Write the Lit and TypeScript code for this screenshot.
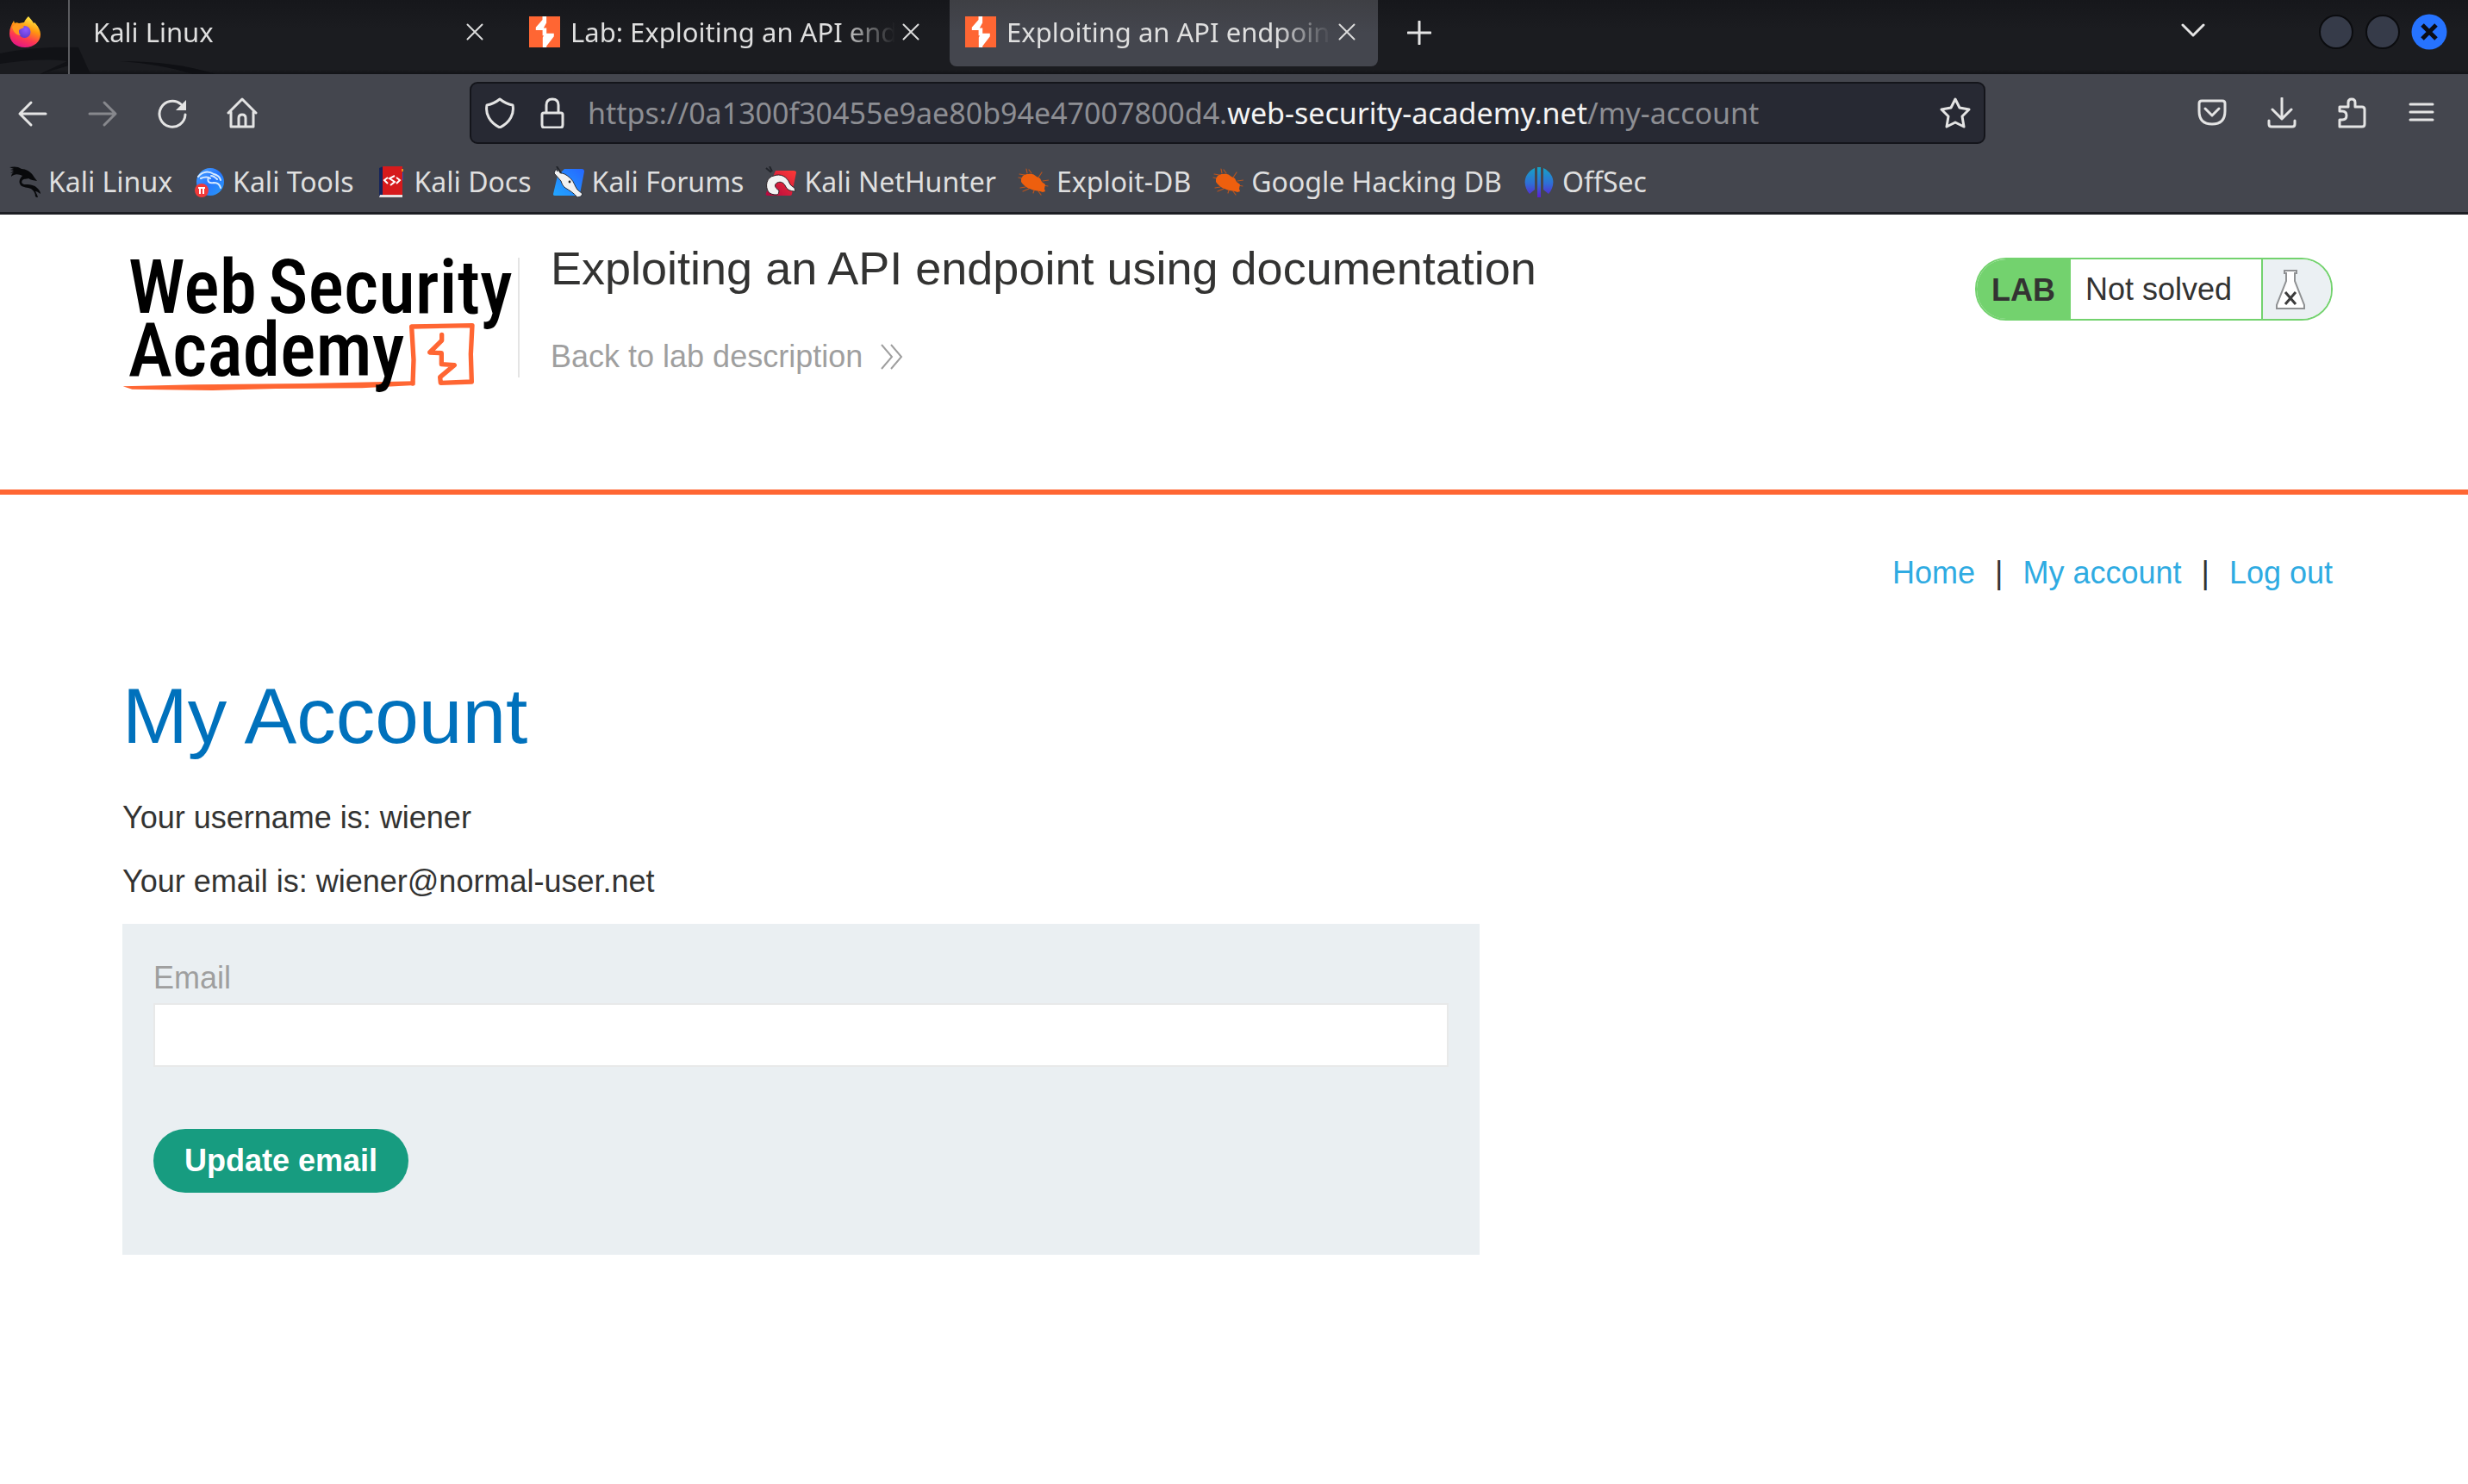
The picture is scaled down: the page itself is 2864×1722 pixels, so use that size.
import { LitElement, html, css, svg, TemplateResult } from "lit";
import { customElement, property } from "lit/decorators.js";

const burpIcon = html`<svg class="fav" viewBox="0 0 36 36" aria-hidden="true">
  <rect width="36" height="36" fill="#ff6633" />
  <path fill="#fff" d="M15.5 0h4.600v7.500L16.800 13.600h3.400v6.200h8.600v3.400L20.200 34.400V36h-4.400V24.600L17 22.200h-1.400V16H7.800v-3.200L15.500 4z" />
</svg>`;

const closeGlyph = html`<svg class="x" viewBox="0 0 20 20" aria-hidden="true">
  <path d="M1.5 1.5l17 17M18.5 1.5l-17 17" fill="none" stroke="#dcdcdc" stroke-width="2" stroke-linecap="round" />
</svg>`;

const bug = html`<svg class="fav" viewBox="0 0 36 36" aria-hidden="true">
  <g stroke="#b8541f" stroke-width="1.2" fill="none" stroke-linecap="round">
    <path d="M8 10L2 9M11 8l-1-5M16 8l-3-4M24 13l4-6M5 14L1 13M29 17l7-1M30 22l5 1M9 24l-6 1M13 26l-7 3M24 29l3 4M19 28l-1 3" />
  </g>
  <path fill="#ee5f0e" d="M4 15c1-4 4-6 8-6 4-1 7 0 10 3l4 2 2 4 4 3-1 5 1 3-3 1-3-1c-4-1-8-1-12-3-4-1-8-5-10-8z" />
</svg>`;

interface Bookmark {
  label: string;
  icon: TemplateResult;
}

const bookmarks: Bookmark[] = [
  {
    label: "Kali Linux",
    icon: html`<svg class="fav" viewBox="0 0 36 36" aria-hidden="true">
      <path fill="#08090b" d="M0 1c5-1 10-1 14 2 5 0 10 3 13 7 1 2 3 4 5 7-4-1-7-1-10-3-2 1-5 0-7 2-2 3 0 5 4 5 6 0 10 1 13 4 2 2 4 4 4 7-3-2-4-3-6-3 1 2 3 5 3 8l-3-2c0-4-2-7-5-9-4-2-9-1-12-4-3-4-1-8 2-11C11 9 6 8 2 12c0-2 1-4 3-5L1 8l4-3-4-1 4-1z" />
    </svg>`,
  },
  {
    label: "Kali Tools",
    icon: html`<svg class="fav" viewBox="0 0 36 36" aria-hidden="true">
      <defs><linearGradient id="kt" x1="0" y1="0" x2="1" y2="1"><stop offset="0" stop-color="#4aa5ff" /><stop offset=".5" stop-color="#2777ff" /><stop offset="1" stop-color="#2a9bf5" /></linearGradient></defs>
      <circle cx="19" cy="18" r="16" fill="url(#kt)" />
      <path d="M5 12c5-6 12-7 18-3 4 1 7 3 8 7M8 14c4-2 9-2 11 0M17 13c-2 5 1 7 6 6 4 0 7 2 8 6M20 11c3 0 5 2 7 4" fill="none" stroke="#d6e9ff" stroke-width="2" stroke-linecap="round" />
      <circle cx="9" cy="28" r="8" fill="#f03a3a" />
      <path d="M5 25h8M7 25v7M11 25v7" stroke="#fff" stroke-width="2" fill="none" />
    </svg>`,
  },
  {
    label: "Kali Docs",
    icon: html`<svg class="fav" viewBox="0 0 36 36" aria-hidden="true">
      <path fill="#15245c" d="M4 2l5-2v33l-5 2z" />
      <path fill="#d61a1c" d="M8 0h23v33H8z" />
      <path fill="#e98b1f" d="M30 3h2v3h-2z" /><path fill="#2d4db5" d="M31 7h1v9h-1z" />
      <path fill="#e6e2e2" d="M5 33h26v3H4z" />
      <path d="M14 13l-4 3 4 4M24 13l4 3-4 4M22 11l-6 3 6 4-5 4" fill="none" stroke="#fff" stroke-width="2" />
    </svg>`,
  },
  {
    label: "Kali Forums",
    icon: html`<svg class="fav" viewBox="0 0 36 36" aria-hidden="true">
      <defs><linearGradient id="kf" x1="1" y1="0" x2="0" y2="1"><stop offset="0" stop-color="#2566ff" /><stop offset="1" stop-color="#22a7ff" /></linearGradient></defs>
      <path fill="url(#kf)" d="M13 3h20c2 0 3 1 3 3l-5 26c0 1-1 2-2 2H2c-2 0-2-1-2-2L5 11z" />
      <path fill="#f1f1f1" stroke="#2b2f38" stroke-width="1" d="M1 8l2-5 2 3 0-5 4 7c4 0 8 3 12 7 3 3 4 8 7 12l6 5-2 3-4 1c-4-5-9-8-14-11-3-2-4-5-5-8z" />
      <circle cx="19" cy="18" r="1.4" fill="#222" />
      <path d="M4 0l5 8" stroke="#22252b" stroke-width="2" />
    </svg>`,
  },
  {
    label: "Kali NetHunter",
    icon: html`<svg class="fav" viewBox="0 0 36 36" aria-hidden="true">
      <defs><linearGradient id="kn" x1="1" y1="0" x2="0" y2="1"><stop offset="0" stop-color="#ff3a36" /><stop offset="1" stop-color="#b3063f" /></linearGradient></defs>
      <path fill="url(#kn)" d="M12 5h21c2 0 3 1 3 2l-5 25c0 1-1 2-2 2H3c-2 0-3-1-2-3z" />
      <path fill="#f3f3f3" stroke="#2b2226" stroke-width="1" d="M4 30C-1 23 2 12 10 11c8-3 15 1 18 8 1 3 3 4 6 6l1 4c-4 0-9-1-11-5-2-5-6-7-10-5-4 2-3 6 2 9 0 3-1 5-3 5-4 0-7-1-9-3z" />
      <path d="M1 2l6 5M5 0l3 6" stroke="#22252b" stroke-width="2" />
    </svg>`,
  },
  { label: "Exploit-DB", icon: bug },
  { label: "Google Hacking DB", icon: bug },
  {
    label: "OffSec",
    icon: html`<svg class="fav" viewBox="0 0 36 36" aria-hidden="true">
      <defs><linearGradient id="os" gradientUnits="userSpaceOnUse" x1="0" y1="0" x2="0" y2="36"><stop offset="0" stop-color="#14a6c4" /><stop offset=".55" stop-color="#2f6fd6" /><stop offset="1" stop-color="#5b1fd0" /></linearGradient></defs>
      <path fill="url(#os)" d="M13 2v25l-6 5C-1 23-1 9 13 2z" />
      <path fill="url(#os)" d="M23 2v25l6 5c8-9 8-23-6-30z" />
      <path fill="url(#os)" d="M16 1h4v35h-4z" />
    </svg>`,
  },
];

const line = (d: string, w = 3) =>
  svg`<path d=${d} fill="none" stroke="#e4e4e4" stroke-width=${w} stroke-linecap="round" stroke-linejoin="round" />`;

@customElement("browser-tab")
export class BrowserTab extends LitElement {
  @property() label = "";
  @property({ type: Boolean }) icon = false;
  @property({ type: Boolean, reflect: true }) active = false;

  static styles = css`
    :host {
      box-sizing: border-box;
      display: flex;
      align-items: center;
      width: 497px;
      height: 77px;
      padding: 0 26px 3px 18px;
      border-radius: 0 0 8px 8px;
    }
    :host([active]) {
      background: linear-gradient(#3e3f44, #44464e 50%);
    }
    .fav {
      width: 36px;
      height: 36px;
      margin-right: 12px;
      flex: none;
    }
    .title {
      flex: 1;
      overflow: hidden;
      white-space: nowrap;
      margin-right: 8px;
      mask-image: linear-gradient(to right, #000 calc(100% - 64px), transparent);
    }
    .close {
      flex: none;
      display: flex;
      padding: 0;
      border: 0;
      background: none;
    }
    .x {
      width: 20px;
      height: 20px;
    }
  `;

  render() {
    return html`${this.icon ? burpIcon : ""}<span class="title">${this.label}</span
      ><button class="close" aria-label="Close tab">${closeGlyph}</button>`;
  }
}

@customElement("app-root")
export class AppRoot extends LitElement {
  static styles = css`
    :host {
      display: block;
      min-height: 100vh;
      background: #fff;
      color: #333332;
      font-family: "Liberation Sans", Arial, sans-serif;
      font-size: 36px;
      line-height: 42px;
    }
    * {
      box-sizing: border-box;
    }
    button {
      padding: 0;
      border: 0;
      background: none;
      font: inherit;
      color: inherit;
    }
    a {
      color: inherit;
      text-decoration: none;
    }
    svg {
      display: block;
      flex: none;
    }
    h1,
    h2,
    p {
      margin: 0;
      font-weight: 400;
    }

    .chrome {
      font-family: "Noto Sans", sans-serif;
      font-size: 32px;
      color: #dfdfdf;
      background: #44464e;
      border-bottom: 3px solid #1d1f24;
    }
    .tabs {
      position: relative;
      display: flex;
      align-items: flex-start;
      height: 86px;
      background: linear-gradient(#16171b, #1b1c20 40%, #1b1c20 94%, #121317);
    }
    .wallpaper {
      position: absolute;
      left: 0;
      top: 0;
      width: 260px;
      height: 86px;
    }
    .tabs > :not(.wallpaper) {
      position: relative;
    }
    .pinned {
      width: 81px;
      height: 86px;
      padding: 19px 0 0 11px;
      border-right: 2px solid #5b5c60;
      margin-right: 9px;
    }
    .tablist {
      display: flex;
      gap: 9px;
      font-size: 31px;
    }
    .newtab {
      margin: 24px 0 0 34px;
    }
    .alltabs {
      margin: 27px 131px 0 auto;
    }
    .window {
      display: flex;
      gap: 12px;
      padding: 16px 24px 0 0;
    }

    .toolbar {
      display: flex;
      align-items: center;
      padding: 9px 36px 0 20px;
    }
    .history {
      display: flex;
      gap: 45px;
      width: 525px;
    }
    .urlbar {
      flex: 1;
      display: flex;
      align-items: center;
      height: 72px;
      padding: 0 15px;
      border: 2px solid #14151b;
      border-radius: 9px;
      background: #272933;
    }
    .urlbar .lock {
      margin: 0 27px 0 29px;
    }
    .url {
      flex: 1;
      font-size: 34px;
      white-space: nowrap;
      color: #8d8e93;
    }
    .url b {
      font-weight: 400;
      color: #f4f4f4;
    }
    .actions {
      display: flex;
      gap: 45px;
      margin-left: 245px;
    }
    .bookmarks {
      display: flex;
      gap: 25px;
      padding: 24px 10px 15px 11px;
      line-height: 40px;
    }
    .bookmark {
      display: flex;
      align-items: center;
      gap: 9px;
      white-space: nowrap;
    }
    .fav {
      width: 36px;
      height: 36px;
    }

    .header {
      display: flex;
      align-items: flex-start;
      padding: 30px 157px 112px 142px;
      border-bottom: 6px solid #ff6633;
    }
    .logo {
      width: 450px;
      height: 157px;
      overflow: visible;
    }
    .brand {
      margin-top: 20px;
      padding-right: 9px;
    }
    .rule {
      width: 2px;
      height: 139px;
      margin: 20px 36px 0 0;
      background: #e4e4e4;
    }
    .headline {
      flex: 1;
    }
    .headline h2 {
      font-size: 54px;
      line-height: 64px;
    }
    .back {
      display: inline-flex;
      align-items: center;
      gap: 20px;
      margin-top: 50px;
      color: #9f9f9f;
    }
    .status {
      display: flex;
      align-items: center;
      height: 73px;
      margin-top: 20px;
      border: 2px solid #73d26e;
      border-radius: 36px;
      overflow: hidden;
      background: #fff;
    }
    .status > * {
      display: flex;
      align-items: center;
      height: 100%;
    }
    .lab {
      padding: 2px 18px 0 17px;
      background: #73d26e;
      font-weight: 700;
    }
    .state {
      padding: 0 34px 0 17px;
    }
    .flask {
      width: 81px;
      padding-left: 14px;
      border-left: 2px solid #73d26e;
      background: #ebf0f3;
    }

    .page {
      padding: 70px 157px 60px 142px;
    }
    .nav {
      display: flex;
      justify-content: flex-end;
      gap: 23px;
    }
    .nav a {
      color: #2fabe2;
    }
    h1 {
      margin-top: 93px;
      font-size: 91px;
      line-height: 104px;
      color: #0071bc;
    }
    .details {
      display: grid;
      gap: 32px;
      margin: 45px 0 28px;
    }
    .form {
      display: grid;
      justify-items: start;
      max-width: 1575px;
      padding: 42px 36px 72px;
      background: #eaeff2;
    }
    .form label {
      color: #9f9f9f;
    }
    .form input {
      width: 100%;
      height: 74px;
      margin: 8px 0 72px;
      padding: 0 16px;
      border: 2px solid #e8e9e9;
      border-radius: 0;
      background: #fff;
      font: inherit;
    }
    .submit {
      height: 74px;
      padding: 0 36px;
      border-radius: 37px;
      background: #179c80;
      color: #fff;
      font-weight: 700;
    }
  `;

  private tabStrip() {
    return html`<div class="tabs">
      <svg class="wallpaper" viewBox="0 0 260 86" aria-hidden="true">
        <path fill="#111216" d="M0 62c30-6 60-8 91-7l14 31H82L80 76 46 86H0V74z" />
        <path fill="#1b1c20" d="M0 74c26-4 54-6 78-3L46 86H0z" />
        <path fill="#0f1014" d="M140 71c40 0 80 5 110 15h-26c-26-8-56-13-84-15z" />
      </svg>
      <div class="pinned">
        <svg class="fav" viewBox="0 0 36 36" role="img" aria-label="Firefox">
          <defs>
            <linearGradient id="ff" x1=".75" y1="0" x2=".35" y2="1"><stop offset="0" stop-color="#fff44f" /><stop offset=".4" stop-color="#ff980e" /><stop offset=".7" stop-color="#ff3b4f" /><stop offset="1" stop-color="#e31587" /></linearGradient>
            <radialGradient id="fp" cx=".6" cy=".3" r=".8"><stop offset="0" stop-color="#9059ff" /><stop offset="1" stop-color="#5b37c8" /></radialGradient>
          </defs>
          <path fill="url(#ff)" d="M22 0c2 3 5 5 6 8l1-1c4 4 7 9 7 14 0 8-7 15-18 15S0 29 0 20C0 14 2 10 5 5l1 3c1-1 3-1 5 0l6-1c1-3 3-5 5-7z" />
          <circle cx="17.5" cy="18" r="7" fill="url(#fp)" />
          <path fill="#ff9a1f" d="M3 12c4-4 8-5 10-3l4 3c-1 2-4 2-6 4 0 3 0 4 2 6-5 0-9-4-10-10z" />
        </svg>
      </div>
      <div class="tablist">
        <browser-tab label="Kali Linux"></browser-tab>
        <browser-tab icon label="Lab: Exploiting an API endpoint"></browser-tab>
        <browser-tab icon active label="Exploiting an API endpoint using documentation"></browser-tab>
      </div>
      <button class="newtab" aria-label="New tab">
        <svg width="28" height="28" viewBox="0 0 28 28">${line("M14 1v26M1 14h26", 3)}</svg>
      </button>
      <button class="alltabs" aria-label="List all tabs">
        <svg width="28" height="18" viewBox="0 0 28 18">${line("M2 2l12 12L26 2", 3)}</svg>
      </button>
      <div class="window">
        ${["Minimize", "Maximize"].map(
          (n) => html`<button aria-label=${n}>
            <svg width="42" height="42" viewBox="0 0 42 42"><circle cx="21" cy="21" r="19" fill="#363b49" stroke="#0b0c0f" stroke-width="2" /></svg>
          </button>`
        )}
        <button aria-label="Close window">
          <svg width="42" height="42" viewBox="0 0 42 42">
            <circle cx="21" cy="21" r="20.5" fill="#2673ff" />
            <path d="M13 13l16 16M29 13L13 29" stroke="#0b0d14" stroke-width="5" />
          </svg>
        </button>
      </div>
    </div>`;
  }

  private toolBar() {
    const icon = (name: string, body: unknown, cls = "") => html`<button class=${cls} aria-label=${name}>
      <svg width="36" height="36" viewBox="0 0 36 36">${body}</svg>
    </button>`;
    return html`<div class="toolbar">
      <div class="history">
        ${icon("Back", line("M33 19H3M16 6L3 19l13 13"))}
        ${icon("Forward", svg`<g opacity=".42">${line("M3 19h30M20 6l13 13-13 13")}</g>`)}
        ${icon(
          "Reload",
          svg`${line("M33 20A15 15 0 1 1 28 8")}<path d="M34 3v12H22z" fill="#e4e4e4" />`
        )}
        ${icon("Home", line("M2 18L18 2l16 16M5 17v17h26V17M14 34V24q0-4 4-4t4 4v10"))}
      </div>
      <div class="urlbar">
        ${icon("Tracking protection", line("M18 2c5 4 10 6 15 7 2 10-3 20-15 26C6 29 1 19 3 9 8 8 13 6 18 2z"))}
        <button class="lock" aria-label="Connection secure">
          <svg width="28" height="36" viewBox="0 0 28 36">
            ${line("M4 18h20q2 0 2 2v12q0 3-3 3H5q-3 0-3-3V20q0-2 2-2zM7 18V9q0-7 7-7t7 7v9")}
          </svg>
        </button>
        <span class="url">https://0a1300f30455e9ae80b94e47007800d4.<b>web-security-academy.net</b>/my-account</span>
        ${icon("Bookmark this page", line("M18 2l5 10 11 2-8 8 2 12-10-5-10 5 2-12-8-8 11-2z"))}
      </div>
      <div class="actions">
        ${icon("Save to Pocket", line("M6 4h24q3 0 3 3v9q0 15-15 15T3 16V7q0-3 3-3zM10 13l8 8 8-8"))}
        ${icon("Downloads", line("M18 1v23M7 14l11 11 11-11M3 27v4q0 3 3 3h24q3 0 3-3v-4"))}
        ${icon("Extensions", line("M4 34V26h3q5 0 5-5t-5-5H4V11h10V6q0-4 4-4t4 4v5h8q3 0 3 3v17q0 3-3 3H4z"))}
        ${icon("Menu", line("M5 8h26M5 17h26M5 26h26"))}
      </div>
    </div>`;
  }

  render() {
    return html`
      <div class="chrome">
        ${this.tabStrip()} ${this.toolBar()}
        <nav class="bookmarks" aria-label="Bookmarks">
          ${bookmarks.map((b) => html`<a class="bookmark" href="#">${b.icon}<span>${b.label}</span></a>`)}
        </nav>
      </div>
      <header class="header">
        <a class="brand" href="#">
          <svg class="logo" viewBox="66 84 1350 471" role="img" aria-label="Web Security Academy">
            <g fill="none" stroke="#ff6633" stroke-width="16" stroke-linejoin="round" stroke-linecap="round">
              <path d="M1077 522L1080 440L1073 324L1284 320L1279 420L1282 516L1174 520L1172 500L1222 458L1177 455V416L1136 414L1178 372V352" />
            </g>
            <path fill="#ff6633" d="M68 532L320 526L700 522L980 516L1084 514V528L900 538L600 540L380 546L100 542z" />
            <g font-family="'Roboto Condensed',Roboto,sans-serif" font-weight="500" font-size="262" fill="#000">
              <text x="86" y="277">Web<tspan dx="-20"> Security</tspan></text>
              <text x="86" y="495">Academy</text>
            </g>
          </svg>
        </a>
        <div class="rule"></div>
        <div class="headline">
          <h2>Exploiting an API endpoint using documentation</h2>
          <a class="back" href="#"
            >Back to lab description
            <svg width="28" height="30" viewBox="0 0 28 30" aria-hidden="true">
              <path d="M2 1l12 14L2 29M13 1l12 14-12 14" fill="none" stroke="#9f9f9f" stroke-width="2" />
            </svg>
          </a>
        </div>
        <div class="status">
          <span class="lab">LAB</span>
          <span class="state">Not solved</span>
          <span class="flask">
            <svg width="36" height="46" viewBox="0 0 36 46" role="img" aria-label="Flask">
              <path d="M11 1h14v3h-2v9l11 28v4H2v-4l11-28V4h-2z" fill="#fff" stroke="#8f9193" stroke-width="2" />
              <path d="M12 26l12 14M24 26L12 40" stroke="#3d3d3d" stroke-width="3" />
            </svg>
          </span>
        </div>
      </header>
      <main class="page">
        <nav class="nav" aria-label="Account">
          <a href="#">Home</a><span>|</span><a href="#">My account</a><span>|</span><a href="#">Log out</a>
        </nav>
        <h1>My Account</h1>
        <div class="details">
          <p>Your username is: wiener</p>
          <p>Your email is: wiener@normal-user.net</p>
        </div>
        <form class="form" @submit=${(e: Event) => e.preventDefault()}>
          <label for="email">Email</label>
          <input id="email" type="email" name="email" />
          <button class="submit" type="submit">Update email</button>
        </form>
      </main>
    `;
  }
}
